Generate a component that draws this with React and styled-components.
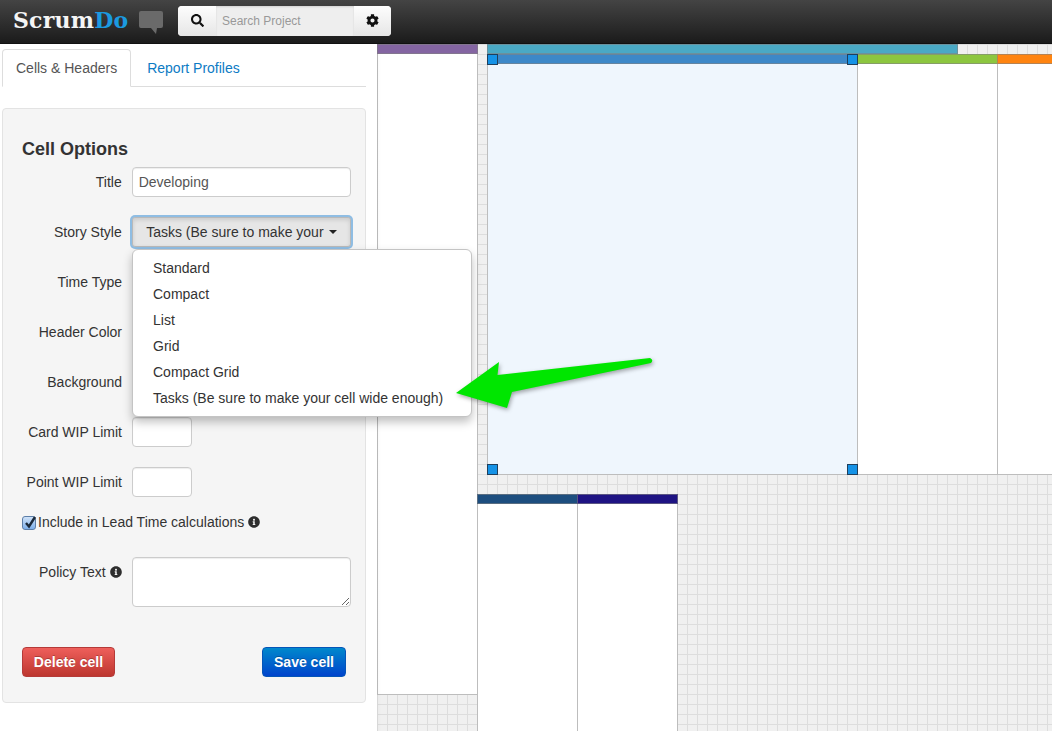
import React from "react";
import styled, { createGlobalStyle } from "styled-components";
import { FaSearch, FaCog, FaInfoCircle } from "react-icons/fa";

const GlobalStyle = createGlobalStyle`
  html, body { margin: 0; padding: 0; height: 100%; overflow: hidden; background: #fff; }
  body { font-family: "Liberation Sans", Arial, sans-serif; font-size: 14px; color: #333; }
`;

const Page = styled.div`
  width: 1052px;
  height: 731px;
  display: flex;
  flex-direction: column;
  overflow: hidden;
  position: relative;
`;

const TopBar = styled.header`
  height: 44px;
  flex: none;
  display: flex;
  align-items: center;
  padding-left: 13px;
  box-sizing: border-box;
  background: linear-gradient(#444444, #1b1b1b);
  border-bottom: 1px solid #111;
`;

const Logo = styled.div`
  font-family: "DejaVu Serif", "Liberation Serif", serif;
  font-size: 22px;
  font-weight: 700;
  letter-spacing: 0.2px;
  color: #f5f5f5;
  width: 125px;
  margin-top: -3px;
  span { color: #1b9ae0; }
`;

const Bubble = styled.svg`
  width: 26px;
  height: 26px;
  margin-right: 14px;
  margin-top: 2px;
`;

const SearchGroup = styled.div`
  display: flex;
  width: 213px;
  height: 30px;
  margin-bottom: 2px;
  border-radius: 4px;
  overflow: hidden;
  background: #f0f0f0;
`;

const GroupBtn = styled.div`
  width: ${(p) => p.$w}px;
  display: flex;
  align-items: center;
  justify-content: center;
  background: linear-gradient(#fdfdfd, #e6e6e6);
  font-size: 13px;
  color: #111;
`;

const SearchBox = styled.div`
  flex: 1;
  display: flex;
  align-items: center;
  padding-left: 6px;
  font-size: 12px;
  color: #999;
  background: #eeeeee;
  box-shadow: inset 0 1px 2px rgba(0, 0, 0, 0.12);
`;

const Body = styled.div`
  flex: 1;
  display: flex;
  min-height: 0;
`;

const Sidebar = styled.aside`
  width: 377px;
  flex: none;
  box-sizing: border-box;
  padding: 5px 11px 0 2px;
`;

const Tabs = styled.nav`
  display: flex;
  height: 38px;
  box-sizing: border-box;
  border-bottom: 1px solid #ddd;
  margin-bottom: 21px;
`;

const Tab = styled.div`
  height: 38px;
  box-sizing: border-box;
  padding: 0 13px 0 ${(p) => (p.$active ? 13 : 15)}px;
  line-height: 37px;
  font-size: 14px;
  border-radius: 4px 4px 0 0;
  color: ${(p) => (p.$active ? "#555" : "#0d7bc4")};
  background: ${(p) => (p.$active ? "#fff" : "transparent")};
  border: 1px solid ${(p) => (p.$active ? "#ddd" : "transparent")};
  border-bottom-color: ${(p) => (p.$active ? "#fff" : "transparent")};
`;

const Well = styled.section`
  height: 595px;
  box-sizing: border-box;
  background: #f5f5f5;
  border: 1px solid #e3e3e3;
  border-radius: 4px;
  padding: 0 14px 0 19px;
  position: relative;
`;

const Heading = styled.h3`
  margin: 0;
  padding-top: 29px;
  height: 58px;
  box-sizing: border-box;
  font-size: 18px;
  line-height: 22px;
  font-weight: 700;
  color: #333;
`;

const Row = styled.div`
  display: flex;
  align-items: ${(p) => (p.$top ? "flex-start" : "center")};
  min-height: 30px;
  margin-bottom: 20px;
`;

const Label = styled.label`
  width: 100px;
  margin-right: 10px;
  text-align: right;
  white-space: nowrap;
  font-size: 14px;
  line-height: 20px;
  color: #333;
  display: flex;
  justify-content: flex-end;
  align-items: center;
  gap: 4px;
  padding-top: ${(p) => (p.$top ? 5 : 0)}px;
`;

const Input = styled.input`
  width: ${(p) => p.$w}px;
  height: 30px;
  box-sizing: border-box;
  padding: 0 6px;
  font: 14px "Liberation Sans", Arial, sans-serif;
  color: #555;
  background: #fff;
  border: 1px solid #ccc;
  border-radius: 4px;
  box-shadow: inset 0 1px 1px rgba(0, 0, 0, 0.07);
  outline: none;
`;

const TextArea = styled.textarea`
  width: 220px;
  height: 50px;
  box-sizing: border-box;
  display: block;
  background: #fff;
  border: 1px solid #ccc;
  border-radius: 4px;
  box-shadow: inset 0 1px 1px rgba(0, 0, 0, 0.07);
  outline: none;
`;

const SelectBtn = styled.div`
  width: 220px;
  height: 30px;
  box-sizing: border-box;
  display: flex;
  align-items: center;
  justify-content: center;
  gap: 5px;
  font-size: 14px;
  color: #333;
  background: #e6e6e6;
  border: 1px solid #b9b9b9;
  border-radius: 3px;
  box-shadow: 0 0 0 2px #8fbde3, inset 0 2px 4px rgba(0, 0, 0, 0.12);
`;

const Caret = styled.i`
  width: 0;
  height: 0;
  border-left: 4px solid transparent;
  border-right: 4px solid transparent;
  border-top: 4px solid #222;
`;

const HiddenBtn = styled.div`
  width: 60px;
  height: 30px;
  box-sizing: border-box;
  background: ${(p) => p.$bg};
  border-radius: 3px;
`;

const CheckRow = styled.div`
  display: flex;
  align-items: center;
  height: 20px;
  margin-top: -5px;
  margin-bottom: 25px;
  gap: 2px;
  white-space: nowrap;
  font-size: 14px;
  color: #333;
`;

const CheckBox = styled.span`
  width: 14px;
  height: 14px;
  flex: none;
  margin-top: 2px;
  box-sizing: border-box;
  border: 1px solid #5c7ea8;
  border-radius: 3px;
  background: linear-gradient(#cfe2f8, #7fb0ea);
  position: relative;
  svg { position: absolute; left: 0; top: -3px; }
`;

const Info = styled(FaInfoCircle)`
  font-size: 12px;
  color: #2e2e2e;
  margin-left: ${(p) => p.$ml || 0}px;
`;

const Actions = styled.div`
  display: flex;
  justify-content: space-between;
  padding-right: 5px;
  margin-top: 40px;
`;

const ActionBtn = styled.button`
  height: 30px;
  width: ${(p) => p.$w}px;
  padding: 0;
  font: 700 14px "Liberation Sans", Arial, sans-serif;
  color: #fff;
  text-shadow: 0 -1px 0 rgba(0, 0, 0, 0.25);
  border: 1px solid ${(p) => p.$edge};
  border-radius: 4px;
  background: linear-gradient(${(p) => p.$top}, ${(p) => p.$bottom});
`;

const Menu = styled.ul`
  position: absolute;
  left: 132px;
  top: 249px;
  width: 340px;
  height: 168px;
  box-sizing: border-box;
  margin: 0;
  padding: 6px 0 0;
  list-style: none;
  background: #fff;
  border: 1px solid #c4c4c4;
  border-radius: 6px;
  box-shadow: 0 5px 10px rgba(0, 0, 0, 0.25);
  z-index: 5;
`;

const MenuItem = styled.li`
  height: 26px;
  line-height: 24px;
  padding-left: 20px;
  font-size: 14px;
  color: #333;
  white-space: nowrap;
`;

const Canvas = styled.main`
  flex: 1;
  position: relative;
  overflow: hidden;
  background-color: #f0f0f0;
  background-image:
    linear-gradient(to right, #dddddd 1px, transparent 1px),
    linear-gradient(to bottom, #dddddd 1px, transparent 1px);
  background-size: 10px 10px;
  &::before {
    content: "";
    position: absolute;
    left: 0;
    top: 0;
    bottom: 0;
    width: 10px;
    background: linear-gradient(to right, rgba(0, 0, 0, 0.07), transparent);
    z-index: 3;
    margin-left: -6px;
  }
`;

const Cell = styled.div`
  position: absolute;
  left: ${(p) => p.$x}px;
  top: ${(p) => p.$y}px;
  width: ${(p) => p.$w}px;
  height: ${(p) => p.$h}px;
  box-sizing: border-box;
  background: ${(p) => p.$fill || "#fff"};
  border: 1px solid #bdbdbd;
  border-top: 0;
`;

const CellHeader = styled.div`
  height: 10px;
  margin: 0 -1px;
  box-sizing: border-box;
  background: ${(p) => p.$color};
  border: 1px solid rgba(130, 130, 130, 0.6);
`;

const Handle = styled.div`
  position: absolute;
  left: ${(p) => p.$x}px;
  top: ${(p) => p.$y}px;
  width: 11px;
  height: 11px;
  box-sizing: border-box;
  background: #1592e6;
  border: 1px solid #1f3f5c;
  z-index: 2;
`;

const Arrow = styled.svg`
  position: absolute;
  left: 450px;
  top: 350px;
  width: 210px;
  height: 65px;
  z-index: 6;
  filter: drop-shadow(1px 2px 2px rgba(0, 0, 0, 0.35));
`;

const menuItems = ["Standard", "Compact", "List", "Grid", "Compact Grid", "Tasks (Be sure to make your cell wide enough)"];

// x/y are relative to the canvas, which starts at 377,44
const cells = [
  { x: 0, y: 0, w: 101, h: 651, color: "#8465a2" },
  { x: 110, y: 0, w: 471, h: 11, color: "#4aa9c5" },
  { x: 480, y: 10, w: 141, h: 421, color: "#8cc63f" },
  { x: 620, y: 10, w: 141, h: 421, color: "#ff8410" },
  { x: 100, y: 450, w: 101, h: 300, color: "#1d4e7f" },
  { x: 200, y: 450, w: 101, h: 300, color: "#1e1383" },
];

export default function App() {
  return (
    <Page>
      <GlobalStyle />
      <TopBar>
        <Logo>Scrum<span>Do</span></Logo>
        <Bubble viewBox="0 0 26 26">
          <path d="M3 1h20a2 2 0 0 1 2 2v13a2 2 0 0 1-2 2h-4l-1 6-5-6H3a2 2 0 0 1-2-2V3a2 2 0 0 1 2-2z" fill="#6a6a6a" />
        </Bubble>
        <SearchGroup>
          <GroupBtn $w={38}><FaSearch /></GroupBtn>
          <SearchBox>Search Project</SearchBox>
          <GroupBtn $w={37}><FaCog /></GroupBtn>
        </SearchGroup>
      </TopBar>
      <Body>
        <Sidebar>
          <Tabs>
            <Tab $active>Cells &amp; Headers</Tab>
            <Tab>Report Profiles</Tab>
          </Tabs>
          <Well>
            <Heading>Cell Options</Heading>
            <Row>
              <Label>Title</Label>
              <Input $w={220} readOnly value="Developing" />
            </Row>
            <Row>
              <Label>Story Style</Label>
              <SelectBtn>Tasks (Be sure to make your <Caret /></SelectBtn>
            </Row>
            <Row>
              <Label>Time Type</Label>
              <HiddenBtn $bg="#e6e6e6" />
            </Row>
            <Row>
              <Label>Header Color</Label>
              <HiddenBtn $bg="#444" />
            </Row>
            <Row>
              <Label>Background</Label>
              <HiddenBtn $bg="#444" />
            </Row>
            <Row>
              <Label>Card WIP Limit</Label>
              <Input $w={60} readOnly />
            </Row>
            <Row>
              <Label>Point WIP Limit</Label>
              <Input $w={60} readOnly />
            </Row>
            <CheckRow>
              <CheckBox>
                <svg width="14" height="16" viewBox="0 0 14 16">
                  <path d="M3 9l3 3.5L12 3" fill="none" stroke="#1c2a3a" strokeWidth="2.4" />
                </svg>
              </CheckBox>
              Include in Lead Time calculations
              <Info $ml={2} />
            </CheckRow>
            <Row $top>
              <Label $top>Policy Text <Info /></Label>
              <TextArea readOnly />
            </Row>
            <Actions>
              <ActionBtn $w={93} $edge="#b53a38" $top="#ee5f5b" $bottom="#bd362f">Delete cell</ActionBtn>
              <ActionBtn $w={84} $edge="#0455b8" $top="#0088cc" $bottom="#0044cc">Save cell</ActionBtn>
            </Actions>
          </Well>
        </Sidebar>
        <Canvas>
          {cells.map((c) => (
            <Cell key={c.x + "-" + c.y} $x={c.x} $y={c.y} $w={c.w} $h={c.h}>
              <CellHeader $color={c.color} />
            </Cell>
          ))}
          <Cell $x={110} $y={10} $w={371} $h={421} $fill="#eff6fd">
            <CellHeader $color="#3d88c8" />
          </Cell>
          <Handle $x={110} $y={10} />
          <Handle $x={470} $y={10} />
          <Handle $x={110} $y={420} />
          <Handle $x={470} $y={420} />
        </Canvas>
      </Body>
      <Menu>
        {menuItems.map((m) => <MenuItem key={m}>{m}</MenuItem>)}
      </Menu>
      <Arrow viewBox="450 350 210 65">
        <path d="M456 393 L499 362 L497.5 375 L650 358 Q654 360 651 363 L512 392 L507 408 Z" fill="#00e600" />
      </Arrow>
    </Page>
  );
}
